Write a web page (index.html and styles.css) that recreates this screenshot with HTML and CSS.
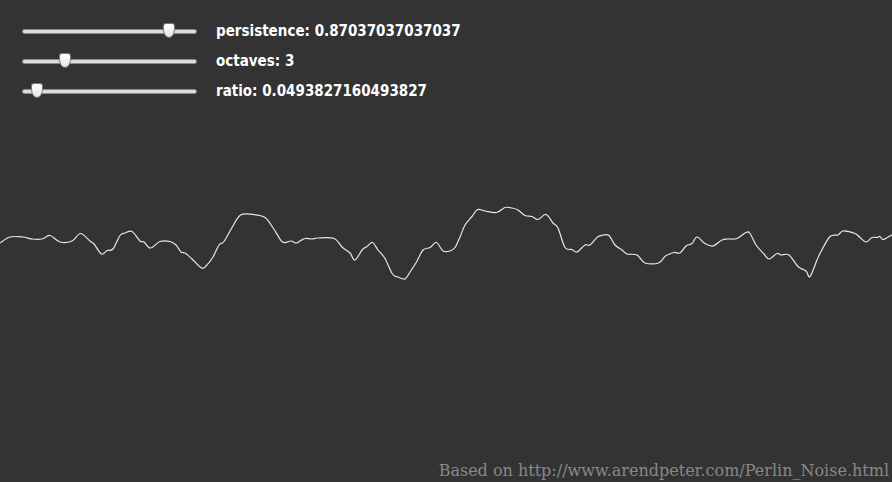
FILE: index.html
```html
<!DOCTYPE html>
<html lang="en">
<head>
  <meta charset="UTF-8" />
  <title>Perlin Noise 1D</title>
  <link rel="stylesheet" href="styles.css">
</head>
<body>

  <!-- Controles -->
  <div class="controls">
    <div class="row">
      <input type="range" min="0" max="1" step="any" value="0.87037037037037" />
      <span class="label">persistence: 0.87037037037037</span>
    </div>
    <div class="row">
      <input type="range" min="1" max="10" step="1" value="3" />
      <span class="label">octaves: 3</span>
    </div>
    <div class="row">
      <input type="range" min="0" max="1" step="any" value="0.0493827160493827" />
      <span class="label">ratio: 0.0493827160493827</span>
    </div>
  </div>

  <!-- Curva -->
  <svg class="noise" width="892" height="354" viewBox="0 106 892 354">
    <path id="curve" data-points="0,243 10,237 23,237 32,239 42,239 50,235.5 60,242 72,241 80.5,233.5 90,241 94,244 101.5,254 107,250.5 113,249 120,235.5 125,233 132,231.5 140,241 144,242 150.5,248 160,241.5 170,241.5 176,245 181,252 185,253 192,259 201.5,268 206,266 213,257 219,245 224,241.5 231.5,228.5 240.5,215 253,214.5 265,217.5 273.5,228.5 282.5,242 291,241 296,243 300,241 305,238.5 312,239 318,238 334,238.5 342.5,247.5 350,253 355,260 362.5,249.5 367,246.5 372.5,242.5 378,250 385,258.5 392.5,274 398,277 405,279 410,272 416.5,262 423,250 430,247.5 436.5,242.5 443,251 450,251 455,247.5 460,237 465,225 472,216.5 477.5,209.5 485,211 496.5,212.5 505,207.5 512,208 518,210 525,215.5 532,216.5 538,219.5 546,214.5 553,223 558,228 565,247.5 572,249.5 577,252 585,245 590,245 597.5,237 603,235 609,235.5 615,245 622,250 627,254 637,255 645,263 658.5,263 665.5,256 674,252.5 680,253 686,246 692,243.5 697,237 705,243.5 713,246 722,240 728,239 737,238.5 746,232.5 750,233.5 756,245 764,254 769,259 777,253.5 781,255 789,255 798,266.5 806,271 810,276.5 817,260 821,251.5 830,236.5 838,235 843,231 855,233.5 860,237.5 866,242 872,237.5 877,237.5 880,236.5 883,239.5 890,236 892,235" />
  </svg>

  <div class="footer">Based on http://www.arendpeter.com/Perlin_Noise.html</div>

  <script>
    // Suavizar la curva (Catmull-Rom -> Bezier)
    const curve = document.getElementById("curve");
    const pts = curve.dataset.points.split(" ").map(p => p.split(",").map(Number));
    let d = `M${pts[0][0]},${pts[0][1]}`;
    for (let i = 0; i < pts.length - 1; i++) {
      const p0 = pts[i - 1] || pts[i];
      const p1 = pts[i];
      const p2 = pts[i + 1];
      const p3 = pts[i + 2] || p2;
      const c1x = p1[0] + (p2[0] - p0[0]) / 6;
      const c1y = p1[1] + (p2[1] - p0[1]) / 6;
      const c2x = p2[0] - (p3[0] - p1[0]) / 6;
      const c2y = p2[1] - (p3[1] - p1[1]) / 6;
      d += ` C${c1x},${c1y} ${c2x},${c2y} ${p2[0]},${p2[1]}`;
    }
    curve.setAttribute("d", d);
  </script>
</body>
</html>
```

FILE: styles.css
```css
html, body {
  height: 100%;
}

body {
  margin: 0;
  background: #333333;
  display: flex;
  flex-direction: column;
  overflow: hidden;
}

.controls {
  padding: 16px 0 0 22px;
}

.row {
  height: 30px;
  display: flex;
  align-items: center;
  gap: 19px;
}

.label {
  font-family: "DejaVu Sans Condensed", "DejaVu Sans", sans-serif;
  font-stretch: condensed;
  font-weight: bold;
  font-size: 15px;
  color: #ffffff;
  margin-top: -1px;
}

input[type="range"] {
  -webkit-appearance: none;
  appearance: none;
  width: 175px;
  height: 5px;
  margin: 0;
  background: #dcdcdc;
  border: 1px solid #8c8c8c;
  border-radius: 3px;
  box-sizing: border-box;
}

input[type="range"]::-webkit-slider-thumb {
  -webkit-appearance: none;
  width: 12px;
  height: 15px;
  margin-top: -2px;
  background: linear-gradient(#ffffff, #e4e4e4);
  border: 1px solid #7a7a7a;
  border-radius: 3px 3px 6px 6px / 3px 3px 9px 9px;
  box-sizing: border-box;
}

.noise {
  display: block;
  flex: none;
}

.noise path {
  fill: none;
  stroke: #e6e6e6;
  stroke-width: 1.2;
  stroke-linejoin: round;
}

.footer {
  margin-top: auto;
  text-align: right;
  padding: 0 3px 2px 0;
  font-family: "DejaVu Serif", serif;
  font-size: 16px;
  color: #888888;
}
```
